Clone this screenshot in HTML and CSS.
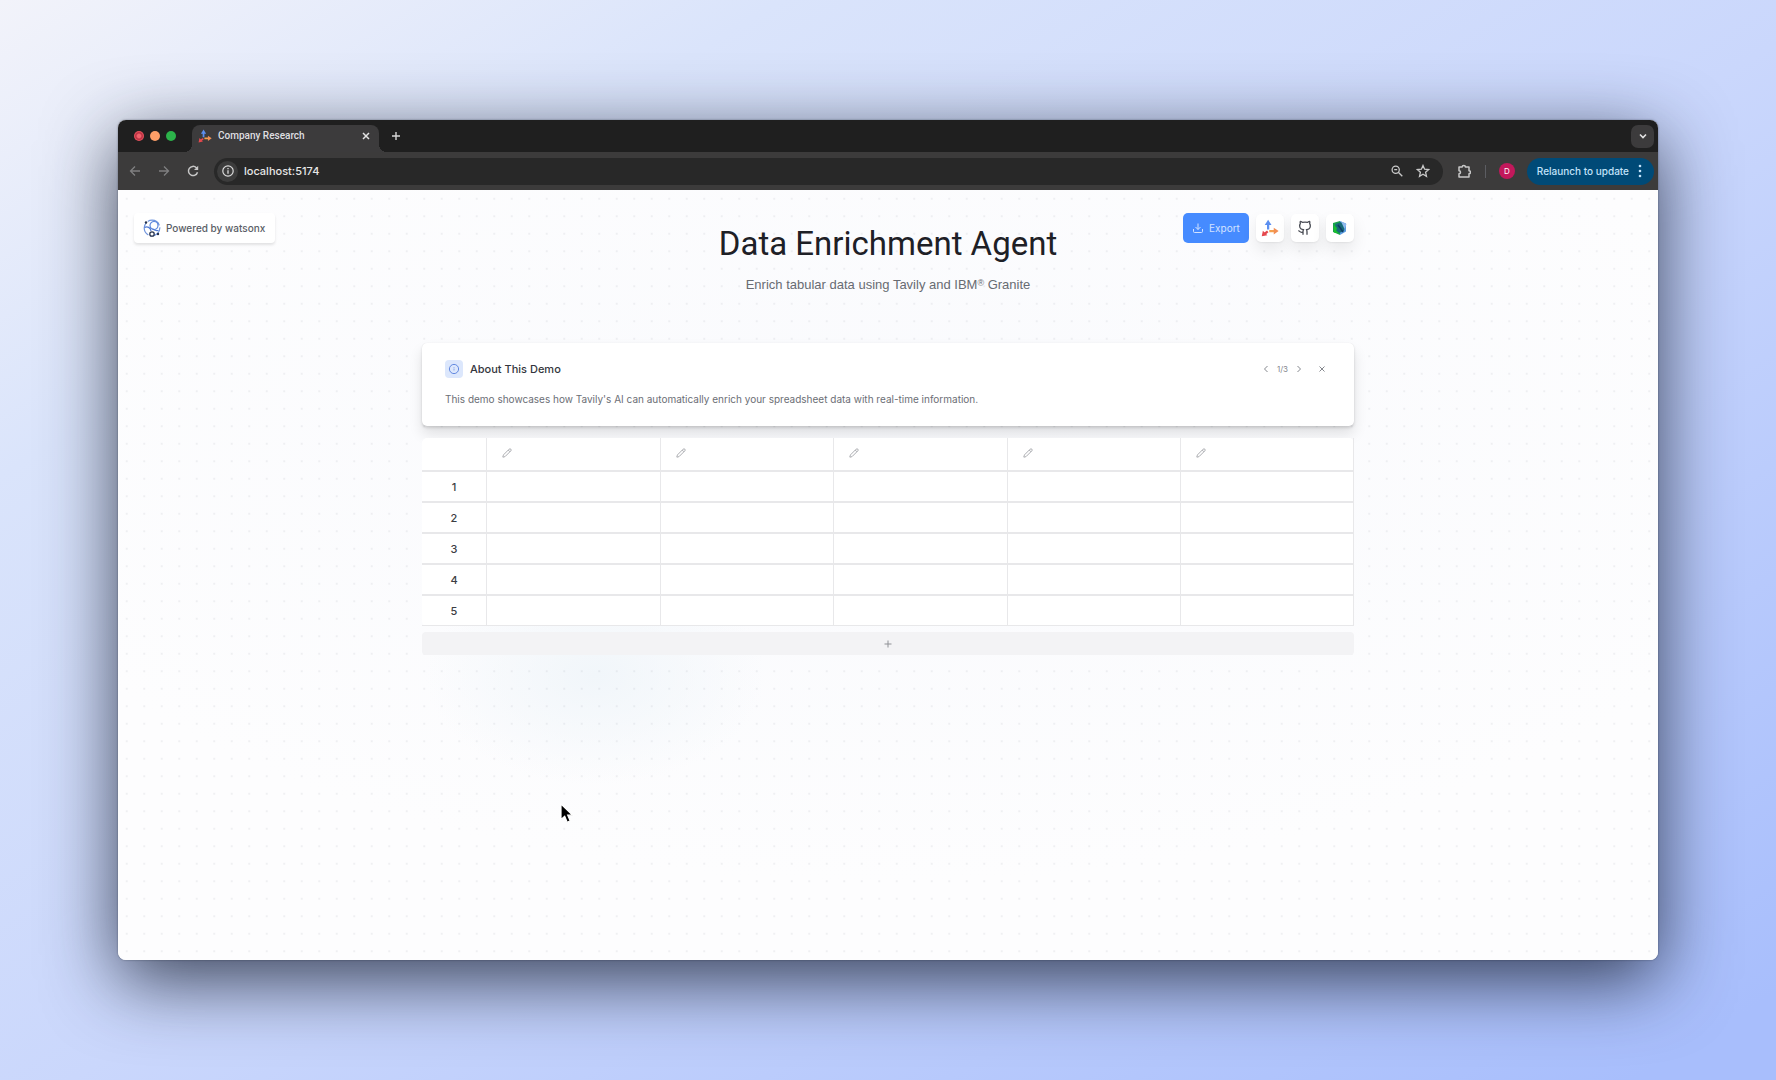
FILE: index.html
```html
<!DOCTYPE html>
<html lang="en">
<head>
<meta charset="utf-8">
<title>Company Research</title>
<link rel="stylesheet" href="styles.css">
</head>
<body>
<svg width="0" height="0" class="defs" aria-hidden="true">
  <symbol id="tavily" viewBox="0 0 24 24">
    <path d="M9.500 14V7" stroke="#5b8ff0" stroke-width="3" fill="none"/>
    <path d="M9.500 1 14 8H5z" fill="#5b8ff0"/>
    <path d="M11 16h7" stroke="#f5a04c" stroke-width="3" fill="none"/>
    <path d="M23.500 16 17 20.500V11.500z" fill="#f28f55"/>
    <path d="M9 16.500 4.500 20" stroke="#e5484d" stroke-width="3" fill="none"/>
    <path d="M1 23 2.500 15.500 8.500 21.500z" fill="#e5484d"/>
  </symbol>
  <symbol id="pencil" viewBox="0 0 24 24">
    <path d="M21.200 6.800a2.800 2.800 0 0 0-4-4L3.800 16.200a2 2 0 0 0-.5.800L2 21.400a.5.5 0 0 0 .6.600L7 20.700a2 2 0 0 0 .800-.5zM15 5l4 4" fill="none" stroke="currentColor" stroke-width="2" stroke-linejoin="round"/>
  </symbol>
</svg>
<div class="window">
  <div class="tabstrip">
    <div class="lights"><span class="light red"></span><span class="light amber"></span><span class="light green"></span></div>
    <div class="tab">
      <svg class="i14"><use href="#tavily"/></svg>
      <span class="tab-name">Company Research</span>
      <button class="bare" aria-label="Close tab"><svg class="i10" viewBox="0 0 10 10"><path d="M2 2l6 6M8 2l-6 6" stroke="#e3e3e3" stroke-width="1.500"/></svg></button>
    </div>
    <button class="bare" aria-label="New tab"><svg class="i10" viewBox="0 0 10 10"><path d="M5 1v8M1 5h8" stroke="#d6d6d6" stroke-width="1.400"/></svg></button>
    <button class="tab-search" aria-label="Search tabs"><svg class="i10" viewBox="0 0 10 10"><path d="M2 3.500l3 3 3-3" fill="none" stroke="#e3e3e3" stroke-width="1.600"/></svg></button>
  </div>
  <div class="toolbar">
    <div class="nav">
      <button class="bare dim" aria-label="Back"><svg class="i12" viewBox="0 0 12 12"><path d="M11 6H2M6 1.500L1.500 6 6 10.500" fill="none" stroke="currentColor" stroke-width="1.300"/></svg></button>
      <button class="bare dim" aria-label="Forward"><svg class="i12" viewBox="0 0 12 12"><path d="M1 6h9M6 1.500L10.500 6 6 10.500" fill="none" stroke="currentColor" stroke-width="1.300"/></svg></button>
      <button class="bare" aria-label="Reload"><svg class="i12" viewBox="0 0 12 12"><path d="M10.500 7.200A4.600 4.600 0 1 1 9.300 2.700L10.500 4" fill="none" stroke="currentColor" stroke-width="1.500"/><path d="M11.200.8v4.200H7z" fill="currentColor"/></svg></button>
    </div>
    <div class="address">
      <button class="site-info" aria-label="Site information"><svg class="i12" viewBox="0 0 12 12"><circle cx="6" cy="6" r="5.200" fill="none" stroke="currentColor" stroke-width="1.200"/><path d="M6 5.300v3.500M6 3v1.300" stroke="currentColor" stroke-width="1.300"/></svg></button>
      <input class="url" type="text" value="localhost:5174" aria-label="Address">
      <button class="bare" aria-label="Zoom"><svg class="i12" viewBox="0 0 12 12"><circle cx="4.700" cy="4.700" r="3.600" fill="none" stroke="currentColor" stroke-width="1.300"/><path d="M7.300 7.300l4 4M3.200 4.700h3" stroke="currentColor" stroke-width="1.300"/></svg></button>
      <button class="bare" aria-label="Bookmark"><svg class="i14" viewBox="0 0 14 14"><path d="M7 1.500l1.600 3.700 4 .4-3 2.700.900 4L7 10.200l-3.500 2.100.9-4-3-2.700 4-.4z" fill="none" stroke="currentColor" stroke-width="1.300"/></svg></button>
    </div>
    <button class="bare" aria-label="Extensions"><svg class="i14" viewBox="0 0 14 14"><path d="M2 3h3.200a1.600 1.600 0 0 1 3.200 0H12v3.700a1.500 1.500 0 0 1 0 3V13H2V9.700a1.500 1.500 0 0 0 0-3z" fill="none" stroke="currentColor" stroke-width="1.500" stroke-linejoin="round"/></svg></button>
    <span class="divider"></span>
    <button class="avatar" aria-label="Profile">D</button>
    <button class="relaunch">Relaunch to update <svg class="dots" viewBox="0 0 4 14"><circle cx="2" cy="2" r="1.300"/><circle cx="2" cy="7" r="1.300"/><circle cx="2" cy="12" r="1.300"/></svg></button>
  </div>
  <div class="page">
    <div class="badge">
      <svg class="i18" viewBox="0 0 18 18" fill="none"><circle cx="9" cy="9" r="7.800" stroke="#6f94dd" stroke-width="1.200" stroke-dasharray="14 2"/><circle cx="11" cy="6.500" r="4" stroke="#5c86dc" stroke-width="1.200"/><path d="M1.500 8.500c3-1.500 6 0 6.500 3.500M15.500 11.500c-3 .5-5-.5-6-2" stroke="#4f79d3" stroke-width="1.200"/><circle cx="9" cy="15" r="2.200" stroke="#26324d" stroke-width="1.300" fill="#fff"/><circle cx="3" cy="3.500" r="1.200" fill="#26324d"/><circle cx="15" cy="15" r="1.200" fill="#26324d"/></svg>
      <span>Powered by watsonx</span>
    </div>
    <main class="content">
      <header class="head">
        <div class="titles">
          <h1>Data Enrichment Agent</h1>
          <p>Enrich tabular data using Tavily and IBM<span class="reg">®</span> Granite</p>
        </div>
        <div class="actions">
          <button class="export"><svg class="i12" viewBox="0 0 24 24" fill="none" stroke="currentColor" stroke-width="2"><path d="M21 14v5a2 2 0 0 1-2 2H5a2 2 0 0 1-2-2v-5M7 10l5 5 5-5M12 15V3"/></svg>Export</button>
          <a class="tile" href="#tavily-site" aria-label="Tavily"><svg class="i18"><use href="#tavily"/></svg></a>
          <a class="tile" href="#github" aria-label="GitHub"><svg class="i16" viewBox="0 0 24 24" fill="none" stroke="#4a4d55" stroke-width="2" stroke-linejoin="round"><path d="M15 22v-4a4.800 4.800 0 0 0-1-3.500c3 0 6-2 6-5.500.080-1.250-.270-2.480-1-3.500.280-1.150.280-2.350 0-3.500 0 0-1 0-3 1.500-2.640-.5-5.360-.5-8 0C6 2 5 2 5 2c-.3 1.150-.3 2.350 0 3.500A5.400 5.400 0 0 0 4 9c0 3.500 3 5.500 6 5.500-.390.490-.680 1.050-.850 1.650-.170.600-.220 1.230-.150 1.850v4M9 18c-4.510 2-5-2-7-2"/></svg></a>
          <a class="tile" href="#docs" aria-label="Documentation"><svg class="i16" viewBox="0 0 16 16"><path d="M1 3l7-2v14l-7-3z" fill="#17a34a"/><path d="M8 1l6 2.500v8L8 15z" fill="#5a9be0"/><path d="M3.500 4L9 2l4 3-1 6-5 2-4-4z" fill="#176b78"/><path d="M9 1.500l5.500 2.500-2 5z" fill="#8eb9ee"/><path d="M2 5l3 3-1 3 3 2.500-5-1z" fill="#19c02c"/><path d="M6 5l3 4 2 3" stroke="#123a66" stroke-width="1.500"/></svg></a>
        </div>
      </header>
      <section class="card">
        <div class="card-head">
          <span class="info"><svg class="i12" viewBox="0 0 12 12"><circle cx="6" cy="6" r="4.600" fill="none" stroke="#6389e0"/><path d="M6 5.500v2M6 4v.8" stroke="#8ba8ea"/></svg></span>
          <h2>About This Demo</h2>
          <div class="pager">
            <button class="bare" aria-label="Previous"><svg class="i10" viewBox="0 0 10 10"><path d="M6.500 2l-3 3 3 3" fill="none" stroke="currentColor"/></svg></button>
            <span>1/3</span>
            <button class="bare" aria-label="Next"><svg class="i10" viewBox="0 0 10 10"><path d="M3.500 2l3 3-3 3" fill="none" stroke="currentColor"/></svg></button>
            <button class="bare close" aria-label="Dismiss"><svg class="i10" viewBox="0 0 10 10"><path d="M2.500 2.500l5 5M7.500 2.500l-5 5" stroke="currentColor"/></svg></button>
          </div>
        </div>
        <p>This demo showcases how Tavily's AI can automatically enrich your spreadsheet data with real-time information.</p>
      </section>
      <table class="sheet">
        <thead><tr><td></td>
          <th><button class="bare" aria-label="Edit column 1"><svg class="i10"><use href="#pencil"/></svg></button></th>
          <th><button class="bare" aria-label="Edit column 2"><svg class="i10"><use href="#pencil"/></svg></button></th>
          <th><button class="bare" aria-label="Edit column 3"><svg class="i10"><use href="#pencil"/></svg></button></th>
          <th><button class="bare" aria-label="Edit column 4"><svg class="i10"><use href="#pencil"/></svg></button></th>
          <th><button class="bare" aria-label="Edit column 5"><svg class="i10"><use href="#pencil"/></svg></button></th>
        </tr></thead>
        <tbody>
          <tr><th>1</th><td></td><td></td><td></td><td></td><td></td></tr>
          <tr><th>2</th><td></td><td></td><td></td><td></td><td></td></tr>
          <tr><th>3</th><td></td><td></td><td></td><td></td><td></td></tr>
          <tr><th>4</th><td></td><td></td><td></td><td></td><td></td></tr>
          <tr><th>5</th><td></td><td></td><td></td><td></td><td></td></tr>
        </tbody>
      </table>
      <button class="add-row" aria-label="Add row"><svg class="i10" viewBox="0 0 10 10"><path d="M5 1.500v7M1.500 5h7" stroke="currentColor"/></svg></button>
    </main>
  </div>
</div>
<svg class="cursor" viewBox="0 0 14 22" aria-hidden="true"><path d="M1 1v15.500l3.700-3.300 2.500 6 3-1.300-2.500-5.700h5z" fill="#000" stroke="#fff" stroke-width="1.200"/></svg>
</body>
</html>
```
FILE: styles.css
```css
* { box-sizing: border-box; }

body {
  margin: 0;
  min-height: 100vh;
  padding: 120px 118px;
  display: flex;
  font-family: Inter, "Liberation Sans", sans-serif;
  font-size: 10px;
  line-height: 16px;
  background: linear-gradient(to bottom right, #f2f3fa 0%, #dae4fb 22%, #cad7fc 52%, #a8befc 96%);
}

h1, h2, p { margin: 0; }
svg { display: block; flex: none; }
.defs { position: absolute; }
.i10 { width: 10px; height: 10px; }
.i12 { width: 12px; height: 12px; }
.i14 { width: 14px; height: 14px; }
.i16 { width: 16px; height: 16px; }
.i18 { width: 18px; height: 18px; }

button { font: inherit; border: 0; padding: 0; cursor: pointer; }
.bare { background: none; color: inherit; }

.window {
  flex: 1;
  display: flex;
  flex-direction: column;
  border-radius: 8px;
  overflow: hidden;
  background: #fff;
  box-shadow: 0 0 2px rgba(20, 25, 40, .5), 0 20px 72px rgba(20, 28, 45, .8);
}

/* Browser chrome */
.tabstrip {
  height: 32px;
  padding: 0 4px 0 16px;
  display: flex;
  align-items: center;
  background: #1f1f1f;
}
.lights { display: flex; gap: 6px; margin-right: 16px; }
.light { width: 10px; height: 10px; border-radius: 50%; }
.red { background: radial-gradient(circle, #f0626b 25%, #b52b3e 45%, #e5525c 65%); }
.amber { background: #fd9f68; }
.green { background: #2cb34a; }
.tab {
  position: relative;
  align-self: flex-end;
  width: 187px;
  height: 27px;
  padding: 0 8px 5px 6px;
  margin-right: 12px;
  display: flex;
  align-items: center;
  gap: 6px;
  border-radius: 8px 8px 0 0;
  background: #3c3b3c;
  color: #dfdfe0;
}
.tab::before, .tab::after {
  content: "";
  position: absolute;
  bottom: 0;
  width: 8px;
  height: 8px;
}
.tab::before { right: 100%; background: radial-gradient(circle at 0 0, transparent 8px, #3c3b3c 8px); }
.tab::after { left: 100%; background: radial-gradient(circle at 100% 0, transparent 8px, #3c3b3c 8px); }
.tab-name { flex: 1; font-family: Roboto, sans-serif; font-weight: 500; }
.tab-search {
  margin-left: auto;
  width: 23px;
  height: 23px;
  display: grid;
  place-items: center;
  border-radius: 7px;
  background: #3c3b3c;
}
.toolbar {
  height: 38px;
  padding: 0 4px 0 11px;
  display: flex;
  align-items: center;
  background: #3c3b3b;
  color: #c7c7c7;
}
.nav { display: flex; gap: 17px; margin-right: 15px; }
.dim { color: #7f7f80; }
.address {
  flex: 1;
  height: 27px;
  margin-right: 14px;
  padding: 0 13px 0 3px;
  display: flex;
  align-items: center;
  gap: 13px;
  border-radius: 14px;
  background: #282828;
}
.site-info {
  width: 21px;
  height: 21px;
  display: grid;
  place-items: center;
  border-radius: 50%;
  background: #3c3c3c;
  color: #dcdcdc;
}
.url {
  flex: 1;
  min-width: 0;
  margin-left: -7px;
  padding: 0;
  border: 0;
  background: none;
  color: #e6e6e6;
  font: 500 11px/16px Inter, sans-serif;
}
.divider { width: 1px; height: 13px; margin: 0 13px 0 14px; background: #5c5d62; }
.avatar {
  width: 16px;
  height: 16px;
  margin-right: 12px;
  border-radius: 50%;
  background: #c2185b;
  color: #fff;
  font-size: 8px;
}
.relaunch {
  height: 27px;
  padding: 0 12px 0 10px;
  display: flex;
  align-items: center;
  gap: 9px;
  border-radius: 14px;
  background: #004a77;
  color: #c2e2fa;
  font-weight: 500;
}
.dots { width: 4px; height: 14px; fill: currentColor; }

/* Page */
.page {
  flex: 1;
  padding: 23px 16px;
  display: grid;
  grid-template-columns: 1fr minmax(auto, 932px) 1fr;
  align-items: start;
  background:
    radial-gradient(circle, rgba(110, 115, 130, .3) 0, transparent 1px) 0 0 / calc(100% / 88) calc(100% / 44),
    radial-gradient(ellipse 170px 110px at 31% 63%, #f1f6fa, transparent),
    radial-gradient(ellipse 60% 55% at 50% 35%, #f9fafd, #fdfdfe);
}
.badge {
  justify-self: start;
  height: 30px;
  padding: 0 10px 0 9px;
  display: flex;
  align-items: center;
  gap: 5px;
  border-radius: 4px;
  background: #fff;
  box-shadow: 0 2px 3px rgba(0, 0, 0, .11);
  color: #5a5e66;
  font-weight: 500;
}
.content { display: flex; flex-direction: column; }
.head {
  display: grid;
  grid-template-columns: 1fr auto 1fr;
  align-items: start;
  margin-bottom: 48px;
}
.titles { grid-column: 2; padding-top: 11px; text-align: center; }
h1 {
  font: 400 33px/40px Roboto, sans-serif;
  color: #1e2026;
}
.titles p {
  margin-top: 11px;
  font: 13px/20px "Liberation Sans", sans-serif;
  color: #686b72;
}
.reg { font-size: 9px; line-height: 1; vertical-align: 3px; }
.actions { justify-self: end; display: flex; align-items: center; gap: 7px; }
.export {
  width: 66px;
  height: 30px;
  display: flex;
  align-items: center;
  justify-content: center;
  gap: 5px;
  border-radius: 5px;
  background: #468bff;
  color: #d3e3ff;
}
.tile {
  width: 28px;
  height: 28px;
  display: grid;
  place-items: center;
  border-radius: 5px;
  background: #fff;
  box-shadow: 0 1px 2px rgba(0, 0, 0, .06), 0 8px 16px rgba(0, 0, 0, .08);
}
.card {
  padding: 16px 23px;
  margin-bottom: 12px;
  border-radius: 5px;
  background: #fff;
  box-shadow: 0 0 1px rgba(0, 0, 0, .1), 0 2px 3px rgba(0, 0, 0, .12), 0 8px 14px rgba(0, 0, 0, .11);
}
.card-head { display: flex; align-items: center; gap: 7px; height: 20px; margin-bottom: 12px; }
.info {
  width: 18px;
  height: 18px;
  display: grid;
  place-items: center;
  border-radius: 4px;
  background: #dce7fc;
}
h2 { font-size: 11px; font-weight: 500; color: #33363d; }
.pager { margin-left: auto; display: flex; align-items: center; gap: 6px; padding-right: 4px; font-size: 8px; color: #85888e; }
.close { margin-left: 7px; }
.card p { padding-bottom: 3px; color: #6b6e75; }

.sheet {
  width: 100%;
  table-layout: fixed;
  border-collapse: separate;
  border-spacing: 0;
  border-radius: 5px;
  background: #fff;
}
.sheet th, .sheet td {
  height: 31px;
  padding: 0;
  border: solid #e8e8ea;
  border-width: 0 0 2px 1px;
}
.sheet thead th, .sheet thead td { height: 34px; }
.sheet tr > :first-child { width: 64px; border-left-width: 0; }
.sheet tr > :last-child { border-right-width: 1px; }
.sheet tbody tr:last-child > * { height: 30px; border-bottom-width: 1px; }
.sheet thead th { padding-left: 15px; text-align: left; color: #9a9ca1; }
.sheet tbody th { font-size: 11px; font-weight: 500; color: #3b3d42; }
.add-row {
  height: 23px;
  margin-top: 6px;
  display: grid;
  place-items: center;
  border-radius: 4px;
  background: #f3f3f5;
  color: #8f9196;
}
.cursor {
  position: absolute;
  left: 560px;
  top: 803px;
  width: 14px;
  height: 22px;
}
```
